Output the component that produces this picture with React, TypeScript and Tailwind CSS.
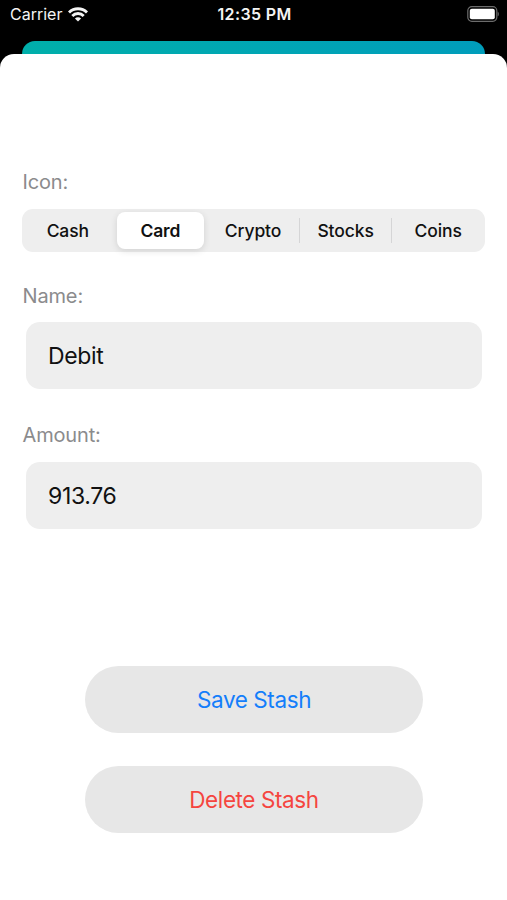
import { useState } from 'react'
import clsx from 'clsx'

const ICONS = ['Cash', 'Card', 'Crypto', 'Stocks', 'Coins']

function StatusBar() {
  return (
    <div className="grid h-[41px] grid-cols-[1fr_auto_1fr] items-start pl-[10px] pr-[8px] pt-[5px] text-[#f4f4f4]">
      <div className="flex h-[19px] items-center gap-[6px]">
        <span className="text-[16px] leading-[19px]">Carrier</span>
        <svg width="20" height="15" viewBox="0 0 20 15" fill="none" stroke="currentColor" strokeWidth="2.9">
          <path d="M1 5.5a12.8 12.8 0 0 1 18 0" />
          <path d="M4.3 8.9a8 8 0 0 1 11.4 0" />
          <path d="M10 14.6 6.9 11.5a4.4 4.4 0 0 1 6.2 0z" fill="currentColor" stroke="none" />
        </svg>
      </div>
      <span className="text-[16px] font-semibold leading-[19px] tracking-[0.35px]">12:35 PM</span>
      <svg width="32" height="17" viewBox="0 0 32 17" className="mt-[1px] justify-self-end">
        <rect x="0.8" y="0.7" width="29" height="14.6" rx="4" fill="none" stroke="#6c6c6c" strokeWidth="1.2" />
        <rect x="2.8" y="2.7" width="25" height="10.6" rx="2" fill="white" />
        <path d="M30.7 5.7c1.5.6 1.5 4 0 4.6z" fill="#6c6c6c" />
      </svg>
    </div>
  )
}

function SegmentedControl() {
  const [selected, setSelected] = useState('Card')
  const current = ICONS.indexOf(selected)

  return (
    <div className="mt-[15px] grid h-[43px] grid-cols-5 rounded-[11px] bg-[#eeeeee]">
      {ICONS.map((name, i) => (
        <button
          key={name}
          onClick={() => setSelected(name)}
          className="flex items-center py-[3px] text-[17.5px] tracking-[-0.1px] text-[#111111]"
        >
          <span
            className={clsx(
              'flex h-full flex-1 items-center justify-center rounded-[8px] pt-[2px]',
              i === current
                ? 'ml-[2px] mr-[3px] bg-white font-semibold shadow-[0_2px_7px_rgba(0,0,0,0.12)]'
                : 'pr-[1px] font-medium'
            )}
          >
            {name}
          </span>
          {i < ICONS.length - 1 && i !== current && i + 1 !== current && (
            <span className="-ml-px h-[25px] w-px bg-[#d5d5d6]" />
          )}
        </button>
      ))}
    </div>
  )
}

function Field({ label, initial }: { label: string; initial: string }) {
  const [value, setValue] = useState(initial)

  return (
    <label className="block">
      <span className="block pl-[0.5px] text-[20px] leading-[24px] tracking-[-0.15px] text-[#8b8b8d]">{label}</span>
      <input
        value={value}
        onChange={(e) => setValue(e.target.value)}
        className="ml-[4px] mt-[14.45px] block h-[67px] w-[456px] rounded-[14px] bg-[#eeeeee] px-[22px] pt-px text-[23px] tracking-[-0.35px] text-[#111111] outline-none"
      />
    </label>
  )
}

export default function App() {
  return (
    <div className="h-[900px] w-[507px] overflow-hidden bg-black font-[Inter,sans-serif] text-black">
      <StatusBar />
      <div className="mx-[22px] h-[13px] rounded-t-[13px] bg-linear-to-r from-[#00afaa] to-[#009dbb]" />
      <main className="h-[846px] rounded-t-[14px] bg-white px-[22px] pt-[116px]">
        <div className="pl-[0.5px] text-[20px] leading-[24px] tracking-[-0.15px] text-[#8b8b8d]">Icon:</div>
        <SegmentedControl />
        <div className="mt-[32px] flex flex-col gap-[34px]">
          <Field label="Name:" initial="Debit" />
          <Field label="Amount:" initial="913.76" />
        </div>
        <div className="mt-[137px] flex flex-col items-center gap-[33px] text-[22.5px] tracking-[-0.4px]">
          <button className="h-[67px] w-[338px] rounded-full bg-[#e7e7e7] pl-px pt-px text-[#147efb]">Save Stash</button>
          <button className="h-[67px] w-[338px] rounded-full bg-[#e7e7e7] pl-px pt-px text-[#f5453f]">Delete Stash</button>
        </div>
      </main>
    </div>
  )
}
